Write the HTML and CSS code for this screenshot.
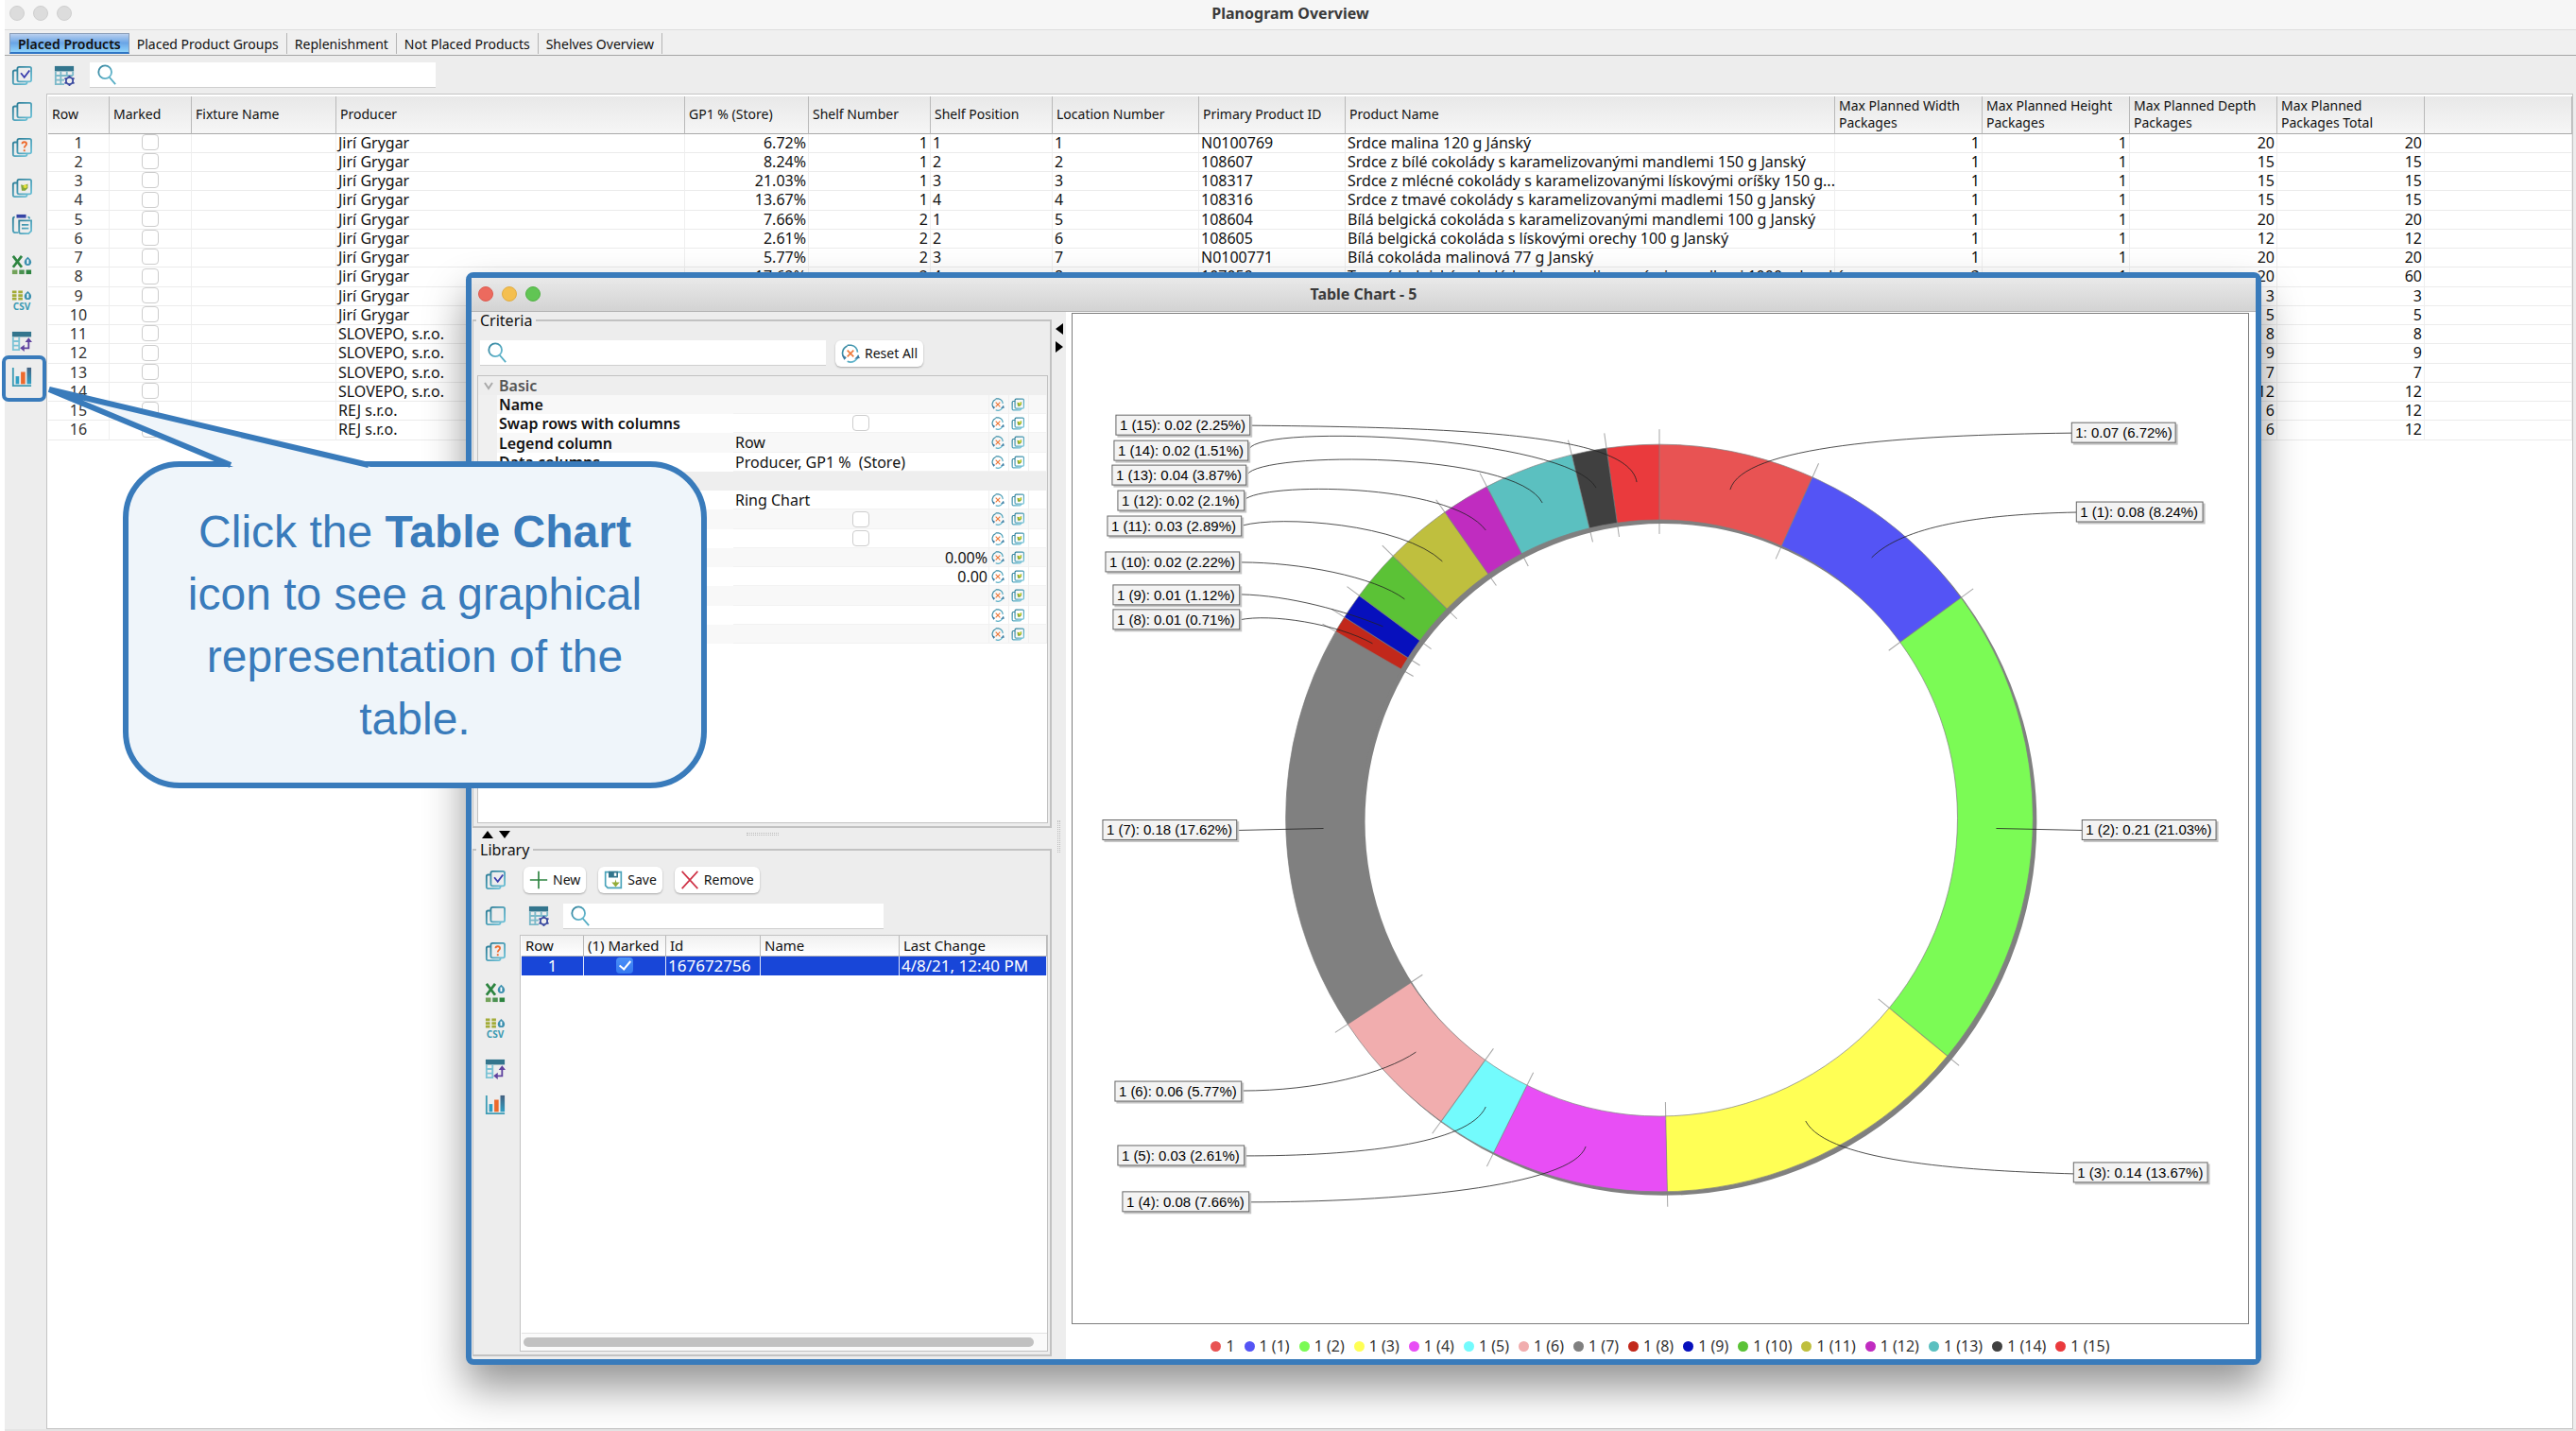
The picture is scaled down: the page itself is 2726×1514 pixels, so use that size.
FILE: index.html
```html
<!DOCTYPE html>
<html lang="en">
<head>
<meta charset="utf-8">
<title>Planogram Overview</title>
<link rel="stylesheet" href="styles.css">
</head>
<body>
<svg class="sprite" aria-hidden="true">
  <defs>
    <linearGradient id="teal" x1="0" y1="0" x2="1" y2="1"><stop offset="0" stop-color="#2e7f99"/><stop offset="1" stop-color="#6cc0d6"/></linearGradient>
    <linearGradient id="blueUp" x1="0" y1="0" x2="0" y2="1"><stop offset="0" stop-color="#44607f"/><stop offset="1" stop-color="#2f9fc4"/></linearGradient>
    <symbol id="pages" viewBox="0 0 24 24"><g fill="none" stroke="url(#teal)" stroke-width="2"><rect x="7" y="2" width="16" height="17" rx="2"/><path d="M7 6H4a2 2 0 0 0-2 2v12a2 2 0 0 0 2 2h12a2 2 0 0 0 2-2v-1"/></g></symbol>
    <symbol id="mark" viewBox="0 0 24 24"><use href="#pages"/><path d="M11 9l4 5 6-8" fill="none" stroke="#3b3fae" stroke-width="2"/></symbol>
    <symbol id="query" viewBox="0 0 24 24"><use href="#pages"/><path d="M12.500 8c0-3 5-3 5 0 0 2-2.500 2-2.500 4.500M15 14.500v2" fill="none" stroke="#ee6a2c" stroke-width="2"/></symbol>
    <symbol id="pick" viewBox="0 0 24 24"><use href="#pages"/><path d="M11 8l4 1 4-2v5l-3 3h-4z" fill="#86a83a"/><circle cx="16" cy="10" r="2" fill="#e4e03a"/></symbol>
    <symbol id="paste" viewBox="0 0 24 24"><path d="M4 4a2 2 0 0 0-2 2v13a3 3 0 0 0 3 3h3M19 4a2 2 0 0 1 2 2" fill="none" stroke="url(#teal)" stroke-width="2"/><path d="M6 1h11v4H6z" fill="#3545a5"/><path d="M9 8h14v12l-3 3H11a2 2 0 0 1-2-2zM12 13h8M12 17h8" fill="none" stroke="url(#teal)" stroke-width="2"/></symbol>
    <symbol id="excel" viewBox="0 0 24 24"><path d="M2 2l10 13M12 2L2 15" stroke="#2d8440" stroke-width="3"/><path d="M19 3c3 3 4 4 4 6a4 4 0 0 1-8 0c0-2 1-3 4-6z" fill="#3b8fae"/><path d="M19 6v5" stroke="#fff" stroke-width="2"/><path d="M1 18h6v5H1z" fill="#73a35a"/><path d="M9 18h6v5H9z" fill="#4a9150"/><path d="M17 18h6v5h-6z" fill="#2d8440"/></symbol>
    <symbol id="csv" viewBox="0 0 24 24"><path d="M1 2h5M8 2h5M1 6h5M8 6h5M1 10h5M8 10h5" stroke="#a3ac38" stroke-width="3"/><path d="M19 1c3 3 4 4 4 6a4 4 0 0 1-8 0c0-2 1-3 4-6z" fill="#3b8fae"/><path d="M19 4v5" stroke="#fff" stroke-width="2"/><text x="12" y="23" text-anchor="middle" class="csv-text">CSV</text></symbol>
    <symbol id="pivot" viewBox="0 0 24 24"><path d="M1 1h22v6H1z" fill="#33758d"/><path d="M2 7v15h7V7M2 12h7M2 17h7" fill="none" stroke="#7cc3d5" stroke-width="2"/><path d="M20 11v9h-7" fill="none" stroke="#60439f" stroke-width="2"/><path d="M16 13l4-5 4 5zM15 16l-5 4 5 4z" fill="#60439f"/></symbol>
    <symbol id="chart" viewBox="0 0 24 24"><path d="M2 1v21h21" fill="none" stroke="#3f9cb5" stroke-width="2"/><path d="M5 11h4v9H5z" fill="#2f9fc4"/><path d="M11 6h5v14h-5z" fill="#ee6a2c"/><path d="M18 1h5v19h-5z" fill="url(#blueUp)"/></symbol>
    <symbol id="columns" viewBox="0 0 24 24"><path d="M1 1h22v6H1z" fill="#33758d"/><path d="M2 7v15h10M22 7v5M2 12h20M2 17h10M8 7v15M15 7v6" fill="none" stroke="#7cb9c9" stroke-width="2"/><circle cx="18" cy="18" r="4" fill="none" stroke="#3a4aa0" stroke-width="2"/><path d="M18 12v2M18 22v2M12.500 15l2 1M21.500 20l2 1M12.500 21l2-1M21.500 16l2-1" stroke="#3a4aa0" stroke-width="2"/></symbol>
    <symbol id="lens" viewBox="0 0 24 24"><circle cx="10" cy="9" r="7.500" fill="none" stroke="url(#teal)" stroke-width="2"/><path d="M15 15l7 8" stroke="#55adc4" stroke-width="2"/></symbol>
    <symbol id="reset" viewBox="0 0 24 24"><path d="M8 2.500A10 10 0 0 0 5 19M8 1.500h5a10 10 0 0 1 8 9M22 14a10 10 0 0 1-14 8" fill="none" stroke="url(#teal)" stroke-width="2"/><path d="M1 13l3 7 3-3zM17 19l7-1-2-4z" fill="#3d79a0"/><path d="M8 8l8 8M16 8l-8 8" stroke="#ee7a3c" stroke-width="2"/></symbol>
    <symbol id="plus" viewBox="0 0 24 24"><path d="M12 1v22M1 12h22" stroke="#2d8440" stroke-width="2"/></symbol>
    <symbol id="disk" viewBox="0 0 24 24"><path d="M2 2h20v20H5l-3-3z" fill="none" stroke="#4aa3ba" stroke-width="2"/><path d="M6 1h12v8H6z" fill="#33758d"/><path d="M13 3h3v4h-3z" fill="#fff"/><path d="M15 11l1 4h4l-5 6-5-6h4z" fill="#93ac38"/></symbol>
    <symbol id="cross" viewBox="0 0 24 24"><path d="M2 1l20 22M22 1L2 23" stroke="#cf3347" stroke-width="2"/></symbol>
  </defs>
</svg>

<main class="window">
  <header class="titlebar">
    <span class="lights"><i></i><i></i><i></i></span>
    <h1>Planogram Overview</h1>
  </header>
  <nav class="tabs">
    <button class="tab active">Placed Products</button><button class="tab">Placed Product Groups</button><button class="tab">Replenishment</button><button class="tab">Not Placed Products</button><button class="tab">Shelves Overview</button>
  </nav>
  <div class="workspace">
    <aside class="toolstrip">
      <button aria-label="Mark all"><svg><use href="#mark"/></svg></button>
      <button aria-label="Unmark all"><svg><use href="#pages"/></svg></button>
      <button aria-label="Mark by condition"><svg><use href="#query"/></svg></button>
      <button class="apart" aria-label="Copy selection"><svg><use href="#pick"/></svg></button>
      <button aria-label="Paste"><svg><use href="#paste"/></svg></button>
      <button class="apart" aria-label="Export to Excel"><svg><use href="#excel"/></svg></button>
      <button aria-label="Export to CSV"><svg><use href="#csv"/></svg></button>
      <button class="apart" aria-label="Pivot table"><svg><use href="#pivot"/></svg></button>
      <button class="highlighted" aria-label="Table Chart"><svg><use href="#chart"/></svg></button>
    </aside>
    <section class="content">
      <div class="searchbar">
        <button aria-label="Columns"><svg><use href="#columns"/></svg></button>
        <label class="search"><svg><use href="#lens"/></svg><input type="search" aria-label="Search products"></label>
      </div>
      <div class="grid-frame">
        <table class="grid">
          <colgroup><col class="w-row"><col class="w-mark"><col class="w-fixture"><col class="w-producer"><col class="w-gp"><col class="w-shelf"><col class="w-shelf"><col class="w-id"><col class="w-id"><col class="w-name"><col class="w-max"><col class="w-max"><col class="w-max"><col class="w-max"><col></colgroup>
          <thead><tr><th>Row</th><th>Marked</th><th>Fixture Name</th><th>Producer</th><th>GP1 % (Store)</th><th>Shelf Number</th><th>Shelf Position</th><th>Location Number</th><th>Primary Product ID</th><th>Product Name</th><th>Max Planned Width Packages</th><th>Max Planned Height Packages</th><th>Max Planned Depth Packages</th><th>Max Planned<br>Packages Total</th><th></th></tr></thead>
          <tbody>
            <tr><td>1</td><td><input type="checkbox" aria-label="Mark row 1"></td><td></td><td>Jirí Grygar</td><td>6.72%</td><td>1</td><td>1</td><td>1</td><td>N0100769</td><td>Srdce malina 120 g Jánský</td><td>1</td><td>1</td><td>20</td><td>20</td><td></td></tr>
            <tr><td>2</td><td><input type="checkbox" aria-label="Mark row 2"></td><td></td><td>Jirí Grygar</td><td>8.24%</td><td>1</td><td>2</td><td>2</td><td>108607</td><td>Srdce z bílé cokolády s karamelizovanými mandlemi 150 g Janský</td><td>1</td><td>1</td><td>15</td><td>15</td><td></td></tr>
            <tr><td>3</td><td><input type="checkbox" aria-label="Mark row 3"></td><td></td><td>Jirí Grygar</td><td>21.03%</td><td>1</td><td>3</td><td>3</td><td>108317</td><td>Srdce z mlécné cokolády s karamelizovanými lískovými oríšky 150 g...</td><td>1</td><td>1</td><td>15</td><td>15</td><td></td></tr>
            <tr><td>4</td><td><input type="checkbox" aria-label="Mark row 4"></td><td></td><td>Jirí Grygar</td><td>13.67%</td><td>1</td><td>4</td><td>4</td><td>108316</td><td>Srdce z tmavé cokolády s karamelizovanými madlemi 150 g Janský</td><td>1</td><td>1</td><td>15</td><td>15</td><td></td></tr>
            <tr><td>5</td><td><input type="checkbox" aria-label="Mark row 5"></td><td></td><td>Jirí Grygar</td><td>7.66%</td><td>2</td><td>1</td><td>5</td><td>108604</td><td>Bílá belgická cokoláda s karamelizovanými mandlemi 100 g Janský</td><td>1</td><td>1</td><td>20</td><td>20</td><td></td></tr>
            <tr><td>6</td><td><input type="checkbox" aria-label="Mark row 6"></td><td></td><td>Jirí Grygar</td><td>2.61%</td><td>2</td><td>2</td><td>6</td><td>108605</td><td>Bílá belgická cokoláda s lískovými orechy 100 g Janský</td><td>1</td><td>1</td><td>12</td><td>12</td><td></td></tr>
            <tr><td>7</td><td><input type="checkbox" aria-label="Mark row 7"></td><td></td><td>Jirí Grygar</td><td>5.77%</td><td>2</td><td>3</td><td>7</td><td>N0100771</td><td>Bílá cokoláda malinová 77 g Janský</td><td>1</td><td>1</td><td>20</td><td>20</td><td></td></tr>
            <tr><td>8</td><td><input type="checkbox" aria-label="Mark row 8"></td><td></td><td>Jirí Grygar</td><td>17.62%</td><td>2</td><td>4</td><td>8</td><td>107059</td><td>Tmavá belgická cokoláda s karamelizovanými mandlemi 1000 g Janský</td><td>3</td><td>1</td><td>20</td><td>60</td><td></td></tr>
            <tr><td>9</td><td><input type="checkbox" aria-label="Mark row 9"></td><td></td><td>Jirí Grygar</td><td></td><td></td><td></td><td></td><td></td><td></td><td></td><td></td><td>3</td><td>3</td><td></td></tr>
            <tr><td>10</td><td><input type="checkbox" aria-label="Mark row 10"></td><td></td><td>Jirí Grygar</td><td></td><td></td><td></td><td></td><td></td><td></td><td></td><td></td><td>5</td><td>5</td><td></td></tr>
            <tr><td>11</td><td><input type="checkbox" aria-label="Mark row 11"></td><td></td><td>SLOVEPO, s.r.o.</td><td></td><td></td><td></td><td></td><td></td><td></td><td></td><td></td><td>8</td><td>8</td><td></td></tr>
            <tr><td>12</td><td><input type="checkbox" aria-label="Mark row 12"></td><td></td><td>SLOVEPO, s.r.o.</td><td></td><td></td><td></td><td></td><td></td><td></td><td></td><td></td><td>9</td><td>9</td><td></td></tr>
            <tr><td>13</td><td><input type="checkbox" aria-label="Mark row 13"></td><td></td><td>SLOVEPO, s.r.o.</td><td></td><td></td><td></td><td></td><td></td><td></td><td></td><td></td><td>7</td><td>7</td><td></td></tr>
            <tr><td>14</td><td><input type="checkbox" aria-label="Mark row 14"></td><td></td><td>SLOVEPO, s.r.o.</td><td></td><td></td><td></td><td></td><td></td><td></td><td></td><td></td><td>12</td><td>12</td><td></td></tr>
            <tr><td>15</td><td><input type="checkbox" aria-label="Mark row 15"></td><td></td><td>REJ s.r.o.</td><td></td><td></td><td></td><td></td><td></td><td></td><td></td><td></td><td>6</td><td>12</td><td></td></tr>
            <tr><td>16</td><td><input type="checkbox" aria-label="Mark row 16"></td><td></td><td>REJ s.r.o.</td><td></td><td></td><td></td><td></td><td></td><td></td><td></td><td></td><td>6</td><td>12</td><td></td></tr>
          </tbody>
        </table>
      </div>
    </section>
  </div>
</main>

<section class="dialog" role="dialog" aria-label="Table Chart - 5">
  <header class="titlebar">
    <span class="lights"><i></i><i></i><i></i></span>
    <h2>Table Chart - 5</h2>
  </header>
  <div class="dialog-body">
    <div class="left-pane">
      <fieldset>
        <legend>Criteria</legend>
        <div class="criteria">
          <div class="criteria-bar">
            <label class="search"><svg><use href="#lens"/></svg><input type="search" aria-label="Search criteria"></label>
            <button class="push"><svg><use href="#reset"/></svg>Reset All</button>
          </div>
          <div class="props-frame">
            <table class="props">
              <colgroup><col class="p-indent"><col class="p-name"><col class="p-value"><col class="p-icon"><col class="p-icon"><col></colgroup>
              <tbody>
                <tr class="group"><th><svg class="chevron" viewBox="0 0 10 10"><path d="M1 2l4 6 4-6"/></svg></th><th colspan="5">Basic</th></tr>
                <tr><td></td><th>Name</th><td></td><td><svg><use href="#reset"/></svg></td><td><svg><use href="#pick"/></svg></td><td></td></tr>
                <tr><td></td><th>Swap rows with columns</th><td class="mid"><input type="checkbox" aria-label="Swap rows with columns"></td><td><svg><use href="#reset"/></svg></td><td><svg><use href="#pick"/></svg></td><td></td></tr>
                <tr><td></td><th>Legend column</th><td>Row</td><td><svg><use href="#reset"/></svg></td><td><svg><use href="#pick"/></svg></td><td></td></tr>
                <tr><td></td><th>Data columns</th><td>Producer, GP1 %&nbsp; (Store)</td><td><svg><use href="#reset"/></svg></td><td><svg><use href="#pick"/></svg></td><td></td></tr>
                <tr class="group"><th></th><th colspan="5"></th></tr>
                <tr><td></td><th></th><td>Ring Chart</td><td><svg><use href="#reset"/></svg></td><td><svg><use href="#pick"/></svg></td><td></td></tr>
                <tr><td></td><th></th><td class="mid"><input type="checkbox" aria-label="Option one"></td><td><svg><use href="#reset"/></svg></td><td><svg><use href="#pick"/></svg></td><td></td></tr>
                <tr><td></td><th></th><td class="mid"><input type="checkbox" aria-label="Option two"></td><td><svg><use href="#reset"/></svg></td><td><svg><use href="#pick"/></svg></td><td></td></tr>
                <tr><td></td><th></th><td class="num">0.00%</td><td><svg><use href="#reset"/></svg></td><td><svg><use href="#pick"/></svg></td><td></td></tr>
                <tr><td></td><th></th><td class="num">0.00</td><td><svg><use href="#reset"/></svg></td><td><svg><use href="#pick"/></svg></td><td></td></tr>
                <tr><td></td><th></th><td></td><td><svg><use href="#reset"/></svg></td><td><svg><use href="#pick"/></svg></td><td></td></tr>
                <tr><td></td><th></th><td></td><td><svg><use href="#reset"/></svg></td><td><svg><use href="#pick"/></svg></td><td></td></tr>
                <tr><td></td><th></th><td></td><td><svg><use href="#reset"/></svg></td><td><svg><use href="#pick"/></svg></td><td></td></tr>
              </tbody>
            </table>
          </div>
        </div>
      </fieldset>
      <div class="split-h"><svg class="arrows" viewBox="0 0 32 8"><path d="M1 8l6-8 6 8zM19 0h12l-6 8z"/></svg><span class="dots"></span></div>
      <fieldset>
        <legend>Library</legend>
        <div class="library">
          <aside class="toolstrip">
            <button aria-label="Mark all"><svg><use href="#mark"/></svg></button>
            <button aria-label="Unmark all"><svg><use href="#pages"/></svg></button>
            <button aria-label="Mark by condition"><svg><use href="#query"/></svg></button>
            <button class="apart" aria-label="Export to Excel"><svg><use href="#excel"/></svg></button>
            <button aria-label="Export to CSV"><svg><use href="#csv"/></svg></button>
            <button class="apart" aria-label="Pivot table"><svg><use href="#pivot"/></svg></button>
            <button aria-label="Table Chart"><svg><use href="#chart"/></svg></button>
          </aside>
          <div class="library-main">
            <div class="actions">
              <button class="push"><svg><use href="#plus"/></svg>New</button>
              <button class="push"><svg><use href="#disk"/></svg>Save</button>
              <button class="push"><svg><use href="#cross"/></svg>Remove</button>
            </div>
            <div class="searchbar">
              <button aria-label="Columns"><svg><use href="#columns"/></svg></button>
              <label class="search"><svg><use href="#lens"/></svg><input type="search" aria-label="Search library"></label>
            </div>
            <div class="lib-frame">
              <table class="lib">
                <colgroup><col class="l-row"><col class="l-mark"><col class="l-id"><col class="l-name"><col></colgroup>
                <thead><tr><th>Row</th><th>(1) Marked</th><th>Id</th><th>Name</th><th>Last Change</th></tr></thead>
                <tbody><tr><td class="mid">1</td><td class="mid"><input type="checkbox" checked aria-label="Mark chart 1"></td><td>167672756</td><td></td><td>4/8/21, 12:40 PM</td></tr></tbody>
              </table>
              <div class="scrollbar"><span></span></div>
            </div>
          </div>
        </div>
      </fieldset>
    </div>
    <div class="split-v"><svg class="arrows" viewBox="0 0 8 32"><path d="M8 0v12L0 6zM0 19v12l8-6z"/></svg><span class="dots"></span></div>
    <div class="chart-pane">
      <svg class="chart" viewBox="0 0 1246 1069" role="img" aria-label="Ring chart of GP1 % by row">
        <circle class="shade" cx="626" cy="538" r="356"/>
        <g class="ring" transform="translate(622 534) rotate(-90)">
          <circle r="356" pathLength="100" stroke="#ea3a3d" stroke-dasharray="2.26 97.74" stroke-dashoffset="-97.74"/>
          <circle r="356" pathLength="100" stroke="#e85353" stroke-dasharray="6.72 93.28"/>
          <circle r="356" pathLength="100" stroke="#5454f5" stroke-dasharray="8.24 91.76" stroke-dashoffset="-6.72"/>
          <circle r="356" pathLength="100" stroke="#7bfb55" stroke-dasharray="21.03 78.97" stroke-dashoffset="-14.96"/>
          <circle r="356" pathLength="100" stroke="#ffff55" stroke-dasharray="13.67 86.33" stroke-dashoffset="-35.99"/>
          <circle r="356" pathLength="100" stroke="#e84ef5" stroke-dasharray="7.66 92.34" stroke-dashoffset="-49.66"/>
          <circle r="356" pathLength="100" stroke="#73fbfd" stroke-dasharray="2.61 97.39" stroke-dashoffset="-57.32"/>
          <circle r="356" pathLength="100" stroke="#f1adae" stroke-dasharray="5.77 94.23" stroke-dashoffset="-59.93"/>
          <circle r="356" pathLength="100" stroke="#808080" stroke-dasharray="17.62 82.38" stroke-dashoffset="-65.70"/>
          <circle r="356" pathLength="100" stroke="#c2281b" stroke-dasharray="0.71 99.29" stroke-dashoffset="-83.32"/>
          <circle r="356" pathLength="100" stroke="#0710bd" stroke-dasharray="1.12 98.88" stroke-dashoffset="-84.03"/>
          <circle r="356" pathLength="100" stroke="#5bc236" stroke-dasharray="2.22 97.78" stroke-dashoffset="-85.15"/>
          <circle r="356" pathLength="100" stroke="#bfbf3e" stroke-dasharray="2.89 97.11" stroke-dashoffset="-87.37"/>
          <circle r="356" pathLength="100" stroke="#c02cc0" stroke-dasharray="2.10 97.90" stroke-dashoffset="-90.26"/>
          <circle r="356" pathLength="100" stroke="#5bc0c0" stroke-dasharray="3.87 96.13" stroke-dashoffset="-92.36"/>
          <circle r="356" pathLength="100" stroke="#404040" stroke-dasharray="1.51 98.49" stroke-dashoffset="-96.23"/>
        </g>
        <g class="rules" transform="translate(622 534)">
          <circle r="396"/><circle r="316"/>
          <path d="M0-412V-301"/>
          <path d="M0-412V-301" transform="rotate(24.19)"/>
          <path d="M0-412V-301" transform="rotate(53.86)"/>
          <path d="M0-412V-301" transform="rotate(129.56)"/>
          <path d="M0-412V-301" transform="rotate(178.78)"/>
          <path d="M0-412V-301" transform="rotate(206.35)"/>
          <path d="M0-412V-301" transform="rotate(215.75)"/>
          <path d="M0-412V-301" transform="rotate(236.52)"/>
          <path d="M0-412V-301" transform="rotate(299.95)"/>
          <path d="M0-412V-301" transform="rotate(302.51)"/>
          <path d="M0-412V-301" transform="rotate(306.54)"/>
          <path d="M0-412V-301" transform="rotate(314.53)"/>
          <path d="M0-412V-301" transform="rotate(324.94)"/>
          <path d="M0-412V-301" transform="rotate(332.5)"/>
          <path d="M0-412V-301" transform="rotate(346.43)"/>
          <path d="M0-412V-301" transform="rotate(351.86)"/>
        </g>
        <g class="leaders">
          <path d="M1059 126C880 128 710 140 697 186"/>
          <path d="M1064 210C960 212 880 225 847 258"/>
          <path d="M1070 547L979 545"/>
          <path d="M1061 911C960 908 800 900 777 855"/>
          <path d="M187 941C340 941 530 925 544 882"/>
          <path d="M182 892C300 892 420 880 438 840"/>
          <path d="M179 823C260 823 330 805 364 782"/>
          <path d="M175 547L266 545"/>
          <path d="M177 324C210 317 280 328 318 349"/>
          <path d="M178 297C230 298 290 315 329 331"/>
          <path d="M179 263C240 263 320 278 352 302"/>
          <path d="M180 224C220 213 350 222 392 262"/>
          <path d="M182 197C200 178 400 178 438 229"/>
          <path d="M185 170C200 145 470 145 498 200"/>
          <path d="M187 143C200 115 525 130 555 184"/>
          <path d="M189 118C420 120 590 128 598 178"/>
        </g>
        <g class="tags">
          <rect x="1059" y="115" width="110" height="21"/><text x="1063" y="131">1: 0.07 (6.72%)</text>
          <rect x="1064" y="199" width="134" height="21"/><text x="1068" y="215">1 (1): 0.08 (8.24%)</text>
          <rect x="1070" y="536" width="142" height="21"/><text x="1074" y="552">1 (2): 0.21 (21.03%)</text>
          <rect x="1061" y="899" width="142" height="21"/><text x="1065" y="915">1 (3): 0.14 (13.67%)</text>
          <rect x="53" y="930" width="134" height="21"/><text x="57" y="946">1 (4): 0.08 (7.66%)</text>
          <rect x="48" y="881" width="134" height="21"/><text x="52" y="897">1 (5): 0.03 (2.61%)</text>
          <rect x="45" y="813" width="134" height="21"/><text x="49" y="829">1 (6): 0.06 (5.77%)</text>
          <rect x="32" y="536" width="142" height="21"/><text x="36" y="552">1 (7): 0.18 (17.62%)</text>
          <rect x="43" y="313" width="134" height="21"/><text x="47" y="329">1 (8): 0.01 (0.71%)</text>
          <rect x="43" y="287" width="134" height="21"/><text x="47" y="303">1 (9): 0.01 (1.12%)</text>
          <rect x="35" y="252" width="142" height="21"/><text x="39" y="268">1 (10): 0.02 (2.22%)</text>
          <rect x="37" y="214" width="142" height="21"/><text x="41" y="230">1 (11): 0.03 (2.89%)</text>
          <rect x="48" y="187" width="134" height="21"/><text x="52" y="203">1 (12): 0.02 (2.1%)</text>
          <rect x="42" y="160" width="142" height="21"/><text x="46" y="176">1 (13): 0.04 (3.87%)</text>
          <rect x="44" y="134" width="142" height="21"/><text x="48" y="150">1 (14): 0.02 (1.51%)</text>
          <rect x="46" y="107" width="142" height="21"/><text x="50" y="123">1 (15): 0.02 (2.25%)</text>
        </g>
      </svg>
      <ul class="legend">
        <li class="c0">1</li><li class="c1">1 (1)</li><li class="c2">1 (2)</li><li class="c3">1 (3)</li><li class="c4">1 (4)</li><li class="c5">1 (5)</li><li class="c6">1 (6)</li><li class="c7">1 (7)</li><li class="c8">1 (8)</li><li class="c9">1 (9)</li><li class="c10">1 (10)</li><li class="c11">1 (11)</li><li class="c12">1 (12)</li><li class="c13">1 (13)</li><li class="c14">1 (14)</li><li class="c15">1 (15)</li>
      </ul>
    </div>
  </div>
</section>

<div class="callout">
  <svg class="pointer" viewBox="0 0 360 100"><path d="M207 94L12 12L352 94" fill="#eff5fa"/><path d="M204 92L12 12L350 92" fill="none" stroke="#397bbb" stroke-width="6"/></svg>
  <p>Click the <strong>Table Chart</strong> icon to see a graphical representation of the table.</p>
</div>
</body>
</html>
```

FILE: styles.css
```css
* { box-sizing: border-box; }

:root {
  --ui: "Noto Sans", "Open Sans", sans-serif;
  --blue: #397bbb;
  --panel: #ededed;
}

body {
  margin: 0;
  min-height: 100vh;
  display: flex;
  background: #fff;
  color: #111;
  font: 14px/18px var(--ui);
  position: relative;
  overflow: hidden;
}

button, input { font: inherit; color: inherit; }
button { border: 0; background: none; padding: 0; }
svg { display: block; width: 22px; height: 22px; }
.sprite { position: absolute; width: 0; height: 0; }
.csv-text { font: bold 11px var(--ui); fill: #3b9ab2; }

/* Main window */
.window {
  flex: 1;
  min-width: 0;
  display: flex;
  flex-direction: column;
  margin-left: 5px;
  padding-bottom: 2px;
  background: #e4e4e4;
}

.titlebar {
  display: grid;
  grid-template-columns: 1fr auto 1fr;
  align-items: center;
}
.window > .titlebar { height: 32px; padding-bottom: 4px; background: #f6f6f6; border-bottom: 1px solid #ddd; }
.titlebar h1, .titlebar h2 { margin: 0; font-size: 16px; font-weight: 700; line-height: 20px; color: #3a3a3a; }
.lights { display: flex; gap: 9px; padding-left: 5px; }
.lights i { width: 16px; height: 16px; border-radius: 50%; background: #dcdcdc; border: 1px solid #cfcfcf; }

.tabs { display: flex; height: 27px; padding: 3px 0 0 5px; background: #f0f0f0; border-bottom: 1px solid #a5a5a5; }
.tab { height: 22px; padding: 2px 8px 0; border-right: 1px solid #b5b5b5; }
.tab.active {
  font-weight: 600;
  background: linear-gradient(#b9cfee, #6aa5e6 50%, #8fd3fb);
  border: 1px solid #8a9db8;
  border-bottom: 2px solid #2f75c4;
}

.workspace { flex: 1; display: flex; background: var(--panel); }
.toolstrip { display: flex; flex-direction: column; gap: 16px; }
.workspace > .toolstrip { width: 44px; padding: 10px 0 0 7px; }
.toolstrip button { width: 22px; height: 22px; }
.toolstrip .apart { margin-top: 5px; }
.highlighted { position: relative; }
.highlighted::after {
  content: "";
  position: absolute;
  inset: -12px -15px -15px -10px;
  border: 4px solid var(--blue);
  border-radius: 7px;
}

.content { flex: 1; min-width: 0; display: flex; flex-direction: column; padding-right: 3px; }
.searchbar { display: flex; align-items: center; gap: 16px; }
.content > .searchbar { height: 40px; padding: 1px 0 0 8px; }
.search {
  display: flex;
  align-items: center;
  width: 366px;
  height: 27px;
  padding-left: 7px;
  background: #fff;
  border-bottom: 1px solid #cfcfcf;
}
.search input { flex: 1; min-width: 0; border: 0; outline: 0; background: none; }

.grid-frame { flex: 1; background: #fff; border: 1px solid #c4c4c4; padding: 2px 0 0 1px; }
table { border-collapse: separate; border-spacing: 0; table-layout: fixed; width: 100%; }
th { font-weight: 400; text-align: left; }
.w-row { width: 65px; } .w-mark { width: 87px; } .w-fixture { width: 153px; }
.w-producer { width: 369px; } .w-gp { width: 131px; } .w-shelf { width: 129px; }
.w-id { width: 155px; } .w-name { width: 518px; } .w-max { width: 156px; }

.grid th {
  height: 40px;
  padding: 0 4px 2px;
  border-right: 1px solid #b9b9b9;
  border-bottom: 1px solid #a9a9a9;
  background: linear-gradient(#e8e8e8, #f6f6f6);
}
.grid td {
  height: 20px;
  padding: 0 2px 2px;
  font-size: 16px;
  line-height: 16px;
  white-space: nowrap;
  border-right: 1px solid #efefef;
  border-bottom: 1px solid #ebebeb;
}
.grid tr:nth-child(4n) td { height: 21px; }
.grid td:nth-child(1), .grid td:nth-child(2) { text-align: center; }
.grid td:nth-child(1) { color: #333; }
.grid td:nth-child(5), .grid td:nth-child(6), .grid td:nth-child(n+11) { text-align: right; }

input[type="checkbox"] {
  appearance: none;
  display: block;
  width: 18px;
  height: 17px;
  margin: 0 auto;
  border: 1px solid #cdcdcd;
  border-radius: 4px;
  background: #fff;
}

/* Chart window */
.dialog {
  position: absolute;
  inset: 288px 333px 70px 493px;
  display: flex;
  flex-direction: column;
  border: 6px solid var(--blue);
  border-radius: 8px;
  background: var(--panel);
  box-shadow: 0 24px 44px rgba(0, 0, 0, .42);
}
.dialog > .titlebar { height: 36px; padding-bottom: 2px; background: linear-gradient(#e9e9e9, #d3d3d3); border-bottom: 1px solid #b2b2b2; }
.dialog .lights { padding-left: 7px; }
.dialog .lights i:nth-child(1) { background: #ec6a5e; border-color: #dd5a4f; }
.dialog .lights i:nth-child(2) { background: #f4bf4f; border-color: #e0ac42; }
.dialog .lights i:nth-child(3) { background: #61c554; border-color: #52b145; }

.dialog-body { flex: 1; min-height: 0; display: flex; }
.left-pane { width: 614px; display: flex; flex-direction: column; padding: 0 0 3px 1px; }
fieldset {
  flex: 1 1 0;
  min-height: 0;
  min-width: 0;
  margin: 0;
  padding: 0;
  border: 2px solid #c2c2c2;
  border-left-width: 1px;
}
legend { margin-left: 3px; padding: 0 4px; font-size: 16px; line-height: 18px; }

.criteria { display: flex; flex-direction: column; height: 100%; padding: 12px 2px 3px 4px; gap: 9px; }
.criteria-bar { display: flex; gap: 10px; padding-left: 3px; }
.push {
  display: flex;
  align-items: center;
  gap: 5px;
  height: 28px;
  padding: 0 6px;
  border-radius: 6px;
  background: #fff;
  box-shadow: 0 1px 2px rgba(0, 0, 0, .3);
}
.push svg { width: 20px; height: 20px; }

.props-frame { flex: 1; background: #fff; border: 1px solid #c2c2c2; }
.p-indent { width: 20px; } .p-name { width: 250px; } .p-value { width: 271px; } .p-icon { width: 21px; }
.props td, .props th { height: 20px; padding: 0 2px; font-size: 16px; line-height: 18px; white-space: nowrap; }
.props th { font-weight: 600; }
.props tr:nth-child(4n) td { height: 21px; }
.props tr:nth-child(even) { background: #f8f8f8; }
.props tr td + th ~ td { border-right: 1px solid #f0f0f0; border-bottom: 1px solid #f2f2f2; }
.props tr td:first-child { background: #f0f0f0; }
.props tr.group { background: #eee; }
.props .group th { color: #555; }
.props svg { width: 14px; height: 14px; }
.props .chevron { width: 10px; height: 10px; margin-left: 4px; fill: none; stroke: #aaa; stroke-width: 2; }
.mid { text-align: center; }
.props .num { text-align: right; padding-right: 1px; }

.split-h { display: flex; align-items: center; height: 14px; padding-left: 9px; }
.split-h .arrows { width: 32px; height: 8px; }
.split-h .dots { width: 34px; height: 3px; margin-left: 249px; border-top: 1px dotted #bbb; border-bottom: 1px dotted #bbb; }
.split-v { width: 15px; display: flex; flex-direction: column; align-items: center; padding-top: 12px; }
.split-v .arrows { width: 8px; height: 32px; }
.split-v .dots { width: 3px; height: 34px; margin-top: 494px; border-left: 1px dotted #bbb; border-right: 1px dotted #bbb; }

.library { display: flex; height: 100%; }
.library .toolstrip { width: 49px; padding: 12px 0 0 12px; }
.library-main { flex: 1; min-width: 0; display: flex; flex-direction: column; padding: 9px 2px 3px 0; }
.actions { display: flex; gap: 13px; padding-left: 4px; }
.library .searchbar { gap: 15px; padding: 11px 0 6px 9px; }
.library .search { width: 339px; }
.lib-frame { flex: 1; display: flex; flex-direction: column; background: #fff; border: 1px solid #c2c2c2; padding-left: 1px; }
.l-row { width: 66px; } .l-mark { width: 87px; } .l-id { width: 100px; } .l-name { width: 147px; }
.lib th { height: 22px; padding: 0 4px; font-size: 15px; border-right: 1px solid #b9b9b9; border-bottom: 1px solid #b9b9b9; background: linear-gradient(#f0f0f0, #fff); white-space: nowrap; }
.lib td { height: 20px; padding: 0 2px; font-size: 17px; line-height: 18px; white-space: nowrap; color: #fff; background: #1846d8; border-right: 1px solid #dfe6fa; }
.lib input:checked {
  border: 0;
  background: #3e86f5 linear-gradient(#4a90f8, #3478f0);
  display: grid;
  place-items: center;
}
.lib input:checked::before { content: ""; width: 5px; height: 10px; margin-bottom: 3px; border: solid #fff; border-width: 0 2px 2px 0; transform: rotate(40deg); }
.scrollbar { margin-top: auto; height: 19px; padding: 4px 14px 4px 2px; background: #fafafa; border-top: 1px solid #e2e2e2; }
.scrollbar span { display: block; height: 10px; border-radius: 5px; background: #c1c1c1; }

.chart-pane { flex: 1; min-width: 0; display: flex; flex-direction: column; padding: 1px 7px 0 6px; background: #fff; }
.chart { flex: 1; min-height: 0; width: 100%; border: 1px solid #7d7d7d; }
.shade { fill: none; stroke: #808080; stroke-width: 80; }
.ring circle { fill: none; stroke-width: 80; }
.rules { fill: none; stroke: #808080; stroke-opacity: .7; }
.leaders { fill: none; stroke: #222; stroke-opacity: .8; }
.tags rect { fill: #f3f3f3; stroke: #666; filter: drop-shadow(2px 2px 0 #c4c4c4); }
.tags text { font: 15px "Liberation Sans", Arial, sans-serif; fill: #000; }

.legend { display: flex; justify-content: center; gap: 10px; height: 37px; margin: 0; padding: 9px 0 0; list-style: none; font-size: 16px; line-height: 22px; color: #333; }
.legend li { display: flex; align-items: center; gap: 5px; white-space: nowrap; }
.legend li::before { content: ""; width: 11px; height: 11px; border-radius: 50%; background: var(--c); }
.c0 { --c: #e85353; } .c1 { --c: #5454f5; } .c2 { --c: #7bfb55; } .c3 { --c: #ffff55; }
.c4 { --c: #e84ef5; } .c5 { --c: #73fbfd; } .c6 { --c: #f1adae; } .c7 { --c: #808080; }
.c8 { --c: #c2281b; } .c9 { --c: #0710bd; } .c10 { --c: #5bc236; } .c11 { --c: #bfbf3e; }
.c12 { --c: #c02cc0; } .c13 { --c: #5bc0c0; } .c14 { --c: #404040; } .c15 { --c: #ea3a3d; }

/* Help bubble */
.callout {
  position: absolute;
  left: 130px;
  top: 488px;
  width: 618px;
  padding: 36px 40px 34px;
  border: 6px solid var(--blue);
  border-radius: 60px;
  background: #eff5fa;
}
.callout p { margin: 0; font: 48px/66px "Liberation Sans", Arial, sans-serif; color: var(--blue); text-align: center; }
.pointer { position: absolute; left: -96px; top: -94px; width: 360px; height: 100px; }
```
